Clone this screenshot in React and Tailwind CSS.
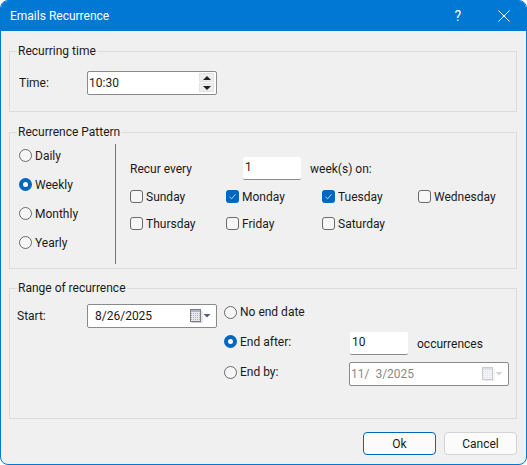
import React from "react";

const Radio = ({ checked }) =>
  checked ? (
    <span className="w-[13px] h-[13px] rounded-full bg-[#0067c0] flex items-center justify-center shrink-0">
      <span className="w-[5px] h-[5px] rounded-full bg-white" />
    </span>
  ) : (
    <span className="w-[13px] h-[13px] rounded-full border border-[#6a6a6a] bg-[#f6f6f6] shrink-0" />
  );

const Check = ({ label, checked }) => (
  <div className="flex items-center gap-[3px] w-[96px] h-[13px]">
    {checked ? (
      <span className="w-[13px] h-[13px] rounded-[3px] bg-[#0067c0] flex items-center justify-center shrink-0">
        <svg width="9" height="9" viewBox="0 0 9 9" fill="none">
          <path d="M1.5 4.8 L3.6 6.8 L7.6 2.2" stroke="#cfe3f5" strokeWidth="0.9" />
        </svg>
      </span>
    ) : (
      <span className="w-[13px] h-[13px] rounded-[3px] border border-[#6a6a6a] bg-[#f6f6f6] shrink-0" />
    )}
    <span>{label}</span>
  </div>
);

const Calendar = ({ disabled }) => (
  <svg width="21" height="16" viewBox="0 0 21 16" className={disabled ? "opacity-40" : ""}>
    <rect x="0.5" y="1.5" width="10" height="12" fill="#aeb3c0" stroke="#7c7f86" />
    <path d="M1 4.5h9M1 6.5h9M1 8.5h9M1 10.5h9M1 12.5h9M2.5 4v9M4.5 4v9M6.5 4v9M8.5 4v9" stroke="#e6e8ec" strokeWidth="1" />
    <path d="M1.5 14.5h10.5V3" stroke="#cfcfcf" fill="none" />
    <path d="M13.5 6h7l-3.5 3.5z" fill={disabled ? "#9a9a9a" : "#4b5f87"} />
  </svg>
);

const GroupBox = ({ title, className, children }) => (
  <div className={`relative border border-[#dcdcdc] ${className}`}>
    <span className="absolute left-[7px] top-[-10px] px-px bg-[#f0f0f0] leading-[18px]">{title}</span>
    {children}
  </div>
);

const App = () => {
  return (
    <div
      className="w-[527px] h-[465px] flex flex-col overflow-hidden rounded-lg border border-[#0078d4] bg-[#f0f0f0] text-[12px] text-[#1a1a1a]"
      style={{ fontFamily: 'Roboto, "Noto Sans", sans-serif' }}
    >
      {/* Title bar */}
      <div className="h-[30px] shrink-0 bg-[#0078d4] text-white flex items-center pl-[9px] pr-[16px]">
        <span className="flex-1">Emails Recurrence</span>
        <span className="text-[14px] mr-[37px]">?</span>
        <svg width="12" height="12" viewBox="0 0 12 12" stroke="white" strokeWidth="1">
          <path d="M0.5 0.5 L11.5 11.5 M11.5 0.5 L0.5 11.5" />
        </svg>
      </div>

      <div className="flex-1 pl-[8px] pr-[9px] pt-[20px]">
        {/* Recurring time */}
        <GroupBox title="Recurring time" className="h-[61px] flex items-center pl-[9px] pt-[2px]">
          <span className="w-[68px]">Time:</span>
          <div className="w-[130px] h-[24px] bg-white border border-[#8a8a8a] rounded-[2px] flex items-center justify-between pl-px pr-[2px]">
            <span>10:30</span>
            <div className="flex flex-col gap-px">
              <span className="w-[15px] h-[9px] bg-[#eeeeee] border border-[#e2e2e2] flex items-center justify-center">
                <span className="border-x-[4px] border-x-transparent border-b-[4px] border-b-[#222]" />
              </span>
              <span className="w-[15px] h-[9px] bg-[#eeeeee] border border-[#e2e2e2] flex items-center justify-center">
                <span className="border-x-[4px] border-x-transparent border-t-[4px] border-t-[#222]" />
              </span>
            </div>
          </div>
        </GroupBox>

        {/* Recurrence Pattern */}
        <GroupBox title="Recurrence Pattern" className="h-[137px] mt-[20px] flex pt-[11px] pl-[9px]">
          <div className="w-[96px] flex flex-col -mt-[3px]">
            {["Daily", "Weekly", "Monthly", "Yearly"].map((label) => (
              <div key={label} className="h-[29px] flex items-center gap-[3px]">
                <Radio checked={label === "Weekly"} />
                <span>{label}</span>
              </div>
            ))}
          </div>
          <div className="w-px h-[120px] bg-[#777]" />
          <div className="pl-[14px] pt-[13px]">
            <div className="flex items-center h-[23px]">
              <span className="w-[113px]">Recur every</span>
              <span className="w-[58px] h-[23px] bg-white border-b border-[#8a8a8a] rounded-[2px] pl-[2px] leading-[20px]">1</span>
              <span className="ml-[9px]">week(s) on:</span>
            </div>
            <div className="flex mt-[10px]">
              <Check label="Sunday" />
              <Check label="Monday" checked />
              <Check label="Tuesday" checked />
              <Check label="Wednesday" />
            </div>
            <div className="flex mt-[14px]">
              <Check label="Thursday" />
              <Check label="Friday" />
              <Check label="Saturday" />
            </div>
          </div>
        </GroupBox>

        {/* Range of recurrence */}
        <GroupBox title="Range of recurrence" className="h-[131px] mt-[19px] flex pl-[7px] pt-[15px]">
          <span className="w-[70px] leading-[24px]">Start:</span>
          <div className="w-[130px] h-[24px] bg-white border border-[#8a8a8a] rounded-[2px] flex items-center justify-between pl-[7px] pr-[5px]">
            <span>8/26/2025</span>
            <Calendar />
          </div>
          <div className="ml-[7px] flex flex-col">
            <div className="h-[16px] flex items-center gap-[3px]">
              <Radio />
              <span>No end date</span>
            </div>
            <div className="h-[23px] mt-[12px] flex items-center">
              <div className="w-[126px] flex items-center gap-[3px] mb-[4px]">
                <Radio checked />
                <span>End after:</span>
              </div>
              <span className="w-[58px] h-[23px] bg-white border-b border-[#8a8a8a] rounded-[2px] pl-[2px] leading-[20px]">10</span>
              <span className="ml-[9px]">occurrences</span>
            </div>
            <div className="h-[24px] mt-[7px] flex items-center">
              <div className="w-[125px] flex items-center gap-[3px] mb-[4px]">
                <Radio />
                <span>End by:</span>
              </div>
              <div className="w-[160px] h-[24px] bg-white border border-[#8a8a8a] rounded-[2px] flex items-center justify-between pl-px pr-[5px] text-[#8a8a8a]">
                <span className="whitespace-pre">11/  3/2025</span>
                <Calendar disabled />
              </div>
            </div>
          </div>
        </GroupBox>

        {/* Buttons */}
        <div className="flex justify-end gap-[8px] mt-[13px]">
          <button className="w-[73px] h-[23px] bg-[#fbfbfb] border border-[#0067c0] rounded-[4px]">Ok</button>
          <button className="w-[73px] h-[23px] bg-[#fbfbfb] border border-[#d4d4d4] rounded-[4px]">Cancel</button>
        </div>
      </div>
    </div>
  );
};

export default App;
